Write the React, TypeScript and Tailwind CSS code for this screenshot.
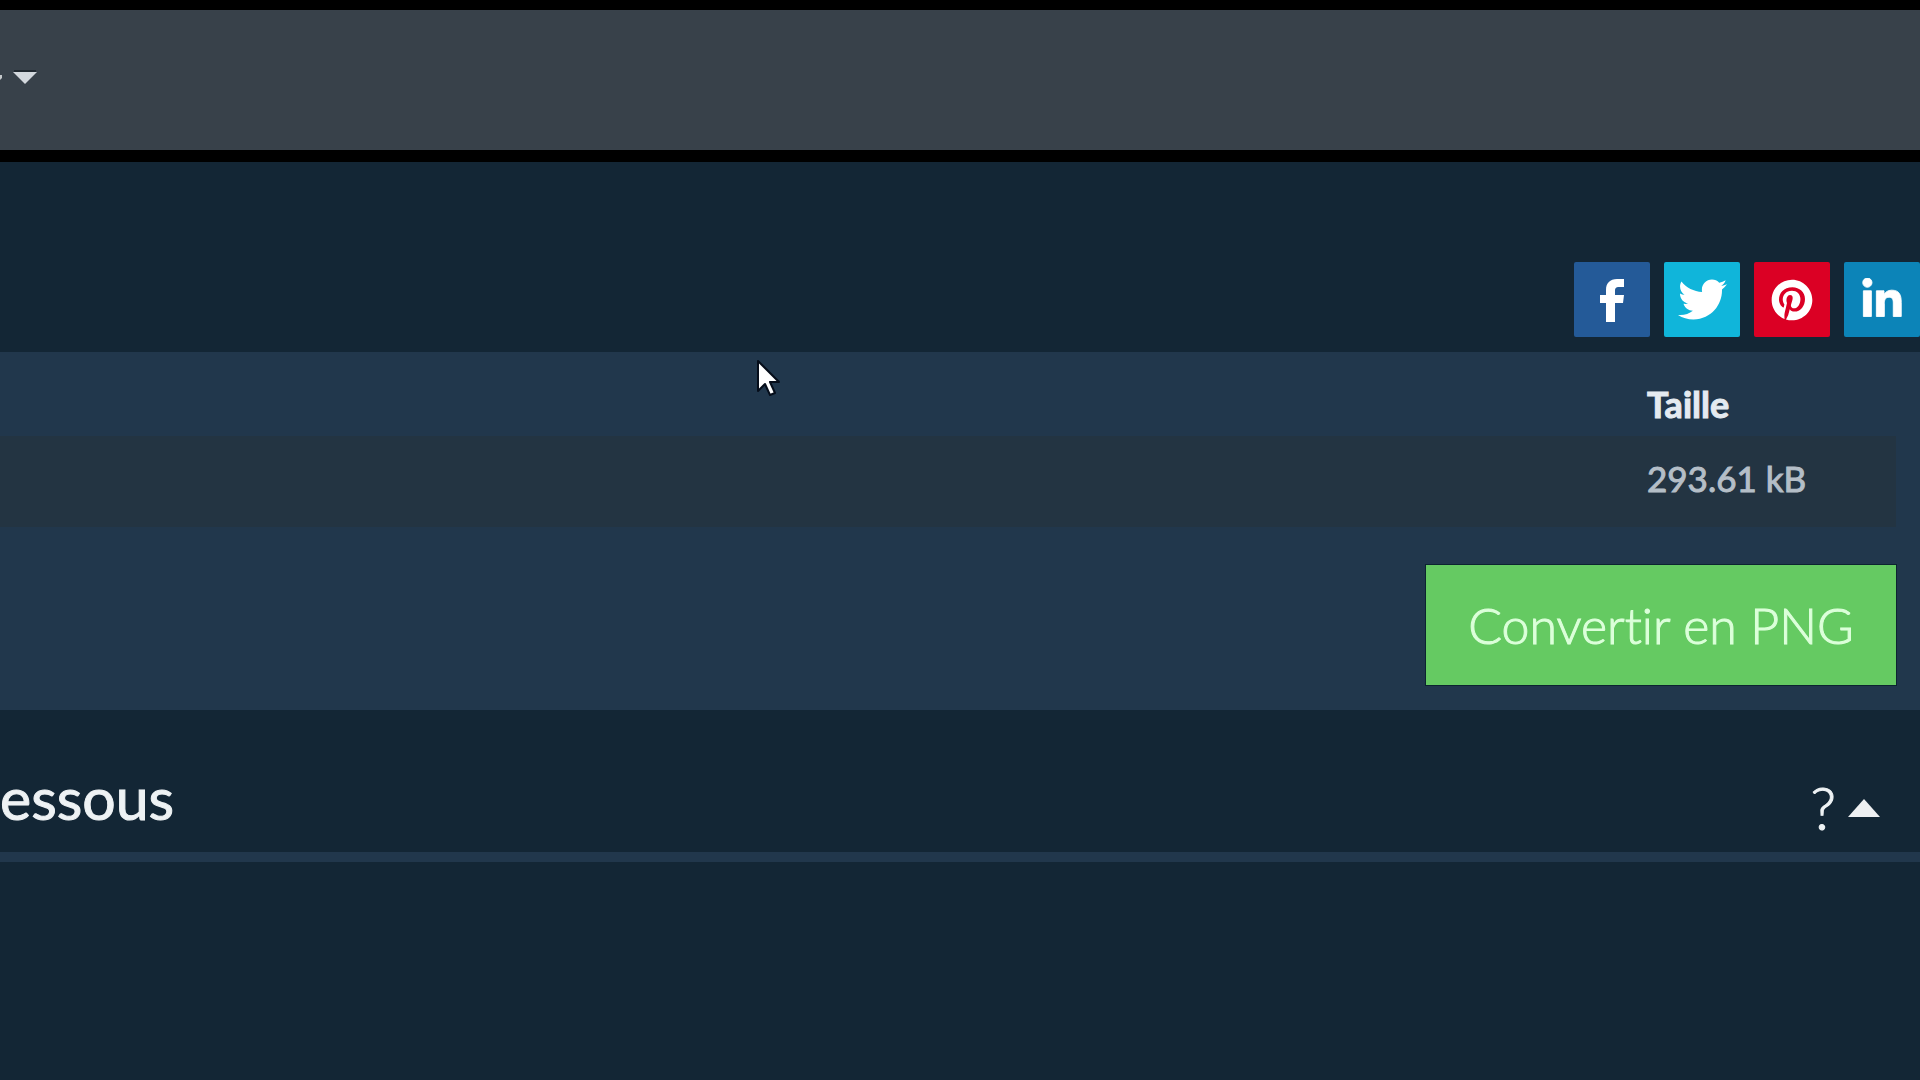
import { FaLinkedinIn, FaPinterest, FaTwitter } from 'react-icons/fa';
import { clsx } from 'clsx';

function FacebookGlyph() {
  return (
    <svg width="26" height="44" viewBox="0 0 26 44" fill="currentColor" aria-hidden="true">
      <path d="M7 44V25H1v-8h6v-5C7 5 11 1 18 1h7v8h-5c-3 0-4 1-4 4v4h9l-1 8h-8v19z" />
    </svg>
  );
}

const shareLinks = [
  { name: 'Facebook', color: 'bg-[#245a98]', icon: <FacebookGlyph /> },
  { name: 'Twitter', color: 'bg-[#10b5da]', icon: <FaTwitter size={49} /> },
  { name: 'Pinterest', color: 'bg-[#db0024]', icon: <FaPinterest size={42} /> },
  { name: 'LinkedIn', color: 'bg-[#0c84b8]', icon: <FaLinkedinIn size={44} stroke="currentColor" strokeWidth={10} /> },
];

const files = [{ id: 1, size: '293.61 kB' }];

function TopBar() {
  return (
    <header className="flex h-[162px] items-center border-t-[10px] border-b-[12px] border-black bg-[#38414a] pb-1">
      <button type="button" aria-label="Menu" className="flex h-8 items-center">
        <svg width="38" height="16" viewBox="0 0 38 16" aria-hidden="true">
          <path d="M0 5h2v3l-2 2z" fill="#c4c8cb" />
          <path d="M14 1h22" stroke="#0b1318" strokeWidth="1" />
          <path d="M13 2h24L25 14z" fill="#d3d8dd" />
        </svg>
      </button>
    </header>
  );
}

function ShareBar() {
  return (
    <nav className="flex h-[190px] items-end justify-end gap-[14px] pb-[15px]">
      {shareLinks.map((link) => (
        <a
          key={link.name}
          href="#"
          aria-label={link.name}
          className={clsx('flex h-[75px] w-[76px] items-center justify-center rounded-xs text-white', link.color)}
        >
          {link.icon}
        </a>
      ))}
    </nav>
  );
}

function FilePanel() {
  return (
    <section className="bg-[#21374c] pr-6 pb-[25px]">
      <table className="w-full text-left text-[36px] leading-[44px]">
        <thead>
          <tr className="h-[84px] text-[#e4eaf0]">
            <td />
            <th scope="col" className="w-[249px] pt-5 font-bold [-webkit-text-stroke:1px]">Taille</th>
          </tr>
        </thead>
        <tbody>
          {files.map((file) => (
            <tr key={file.id} className="h-[91px] bg-[#233442] text-[35px] text-[#b4bec7]">
              <td />
              <td className="w-[249px] pb-2 [-webkit-text-stroke:1px]">{file.size}</td>
            </tr>
          ))}
        </tbody>
      </table>
      <div className="flex justify-end pt-[38px]">
        <button
          type="button"
          className="h-[120px] w-[470px] bg-[#65ca62] text-[50px] font-light text-[#dcffda] ring-1 ring-[#0c2430] [font-variant-ligatures:none] [-webkit-text-stroke:1px]"
        >
          Convertir en PNG
        </button>
      </div>
    </section>
  );
}

function SectionHeader() {
  return (
    <div className="flex h-[152px] items-end justify-between border-b-[10px] border-[#21374c] pr-10 pb-2 text-[59px] text-[#eef2f4] [-webkit-text-stroke:1px]">
      <h2 className="pb-[2px] leading-[88px]">essous</h2>
      <button type="button" aria-expanded="true" className="flex items-center gap-3 leading-[72px] font-light">
        <span>?</span>
        <svg width="32" height="18" viewBox="0 0 32 18" aria-hidden="true">
          <path d="M16 0l16 18H0z" fill="#eef0f2" />
        </svg>
      </button>
    </div>
  );
}

function Pointer() {
  return (
    <svg className="absolute top-[358px] left-[755px]" width="28" height="40" viewBox="0 0 28 40" aria-hidden="true">
      <path
        d="M3 3v30l7-7 5 11 5-2-5-11h9z"
        fill="#fff"
        stroke="#050d1a"
        strokeWidth="2"
        strokeLinejoin="round"
      />
    </svg>
  );
}

export default function App() {
  return (
    <div className="relative min-h-screen overflow-hidden bg-[#132635] font-['Lato',sans-serif]">
      <TopBar />
      <main>
        <ShareBar />
        <FilePanel />
        <SectionHeader />
      </main>
      <Pointer />
    </div>
  );
}
